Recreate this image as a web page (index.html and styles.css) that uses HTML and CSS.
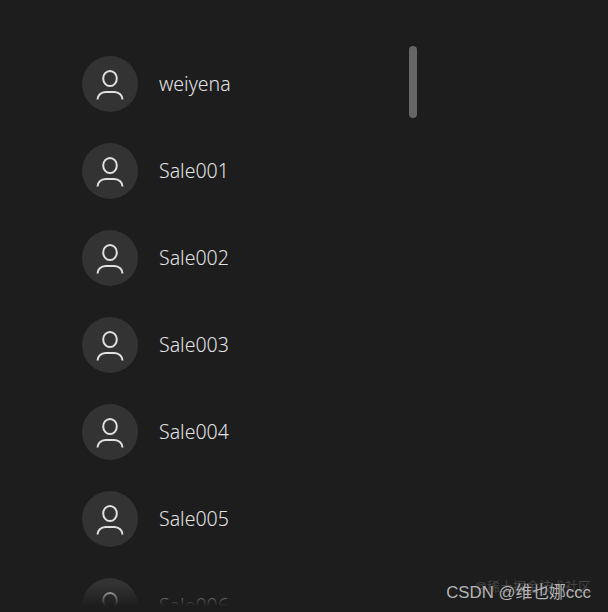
FILE: index.html
```html
<!DOCTYPE html>
<html>
<head>
  <meta charset="utf-8">
  <link rel="stylesheet" href="styles.css">
</head>
<body>
  <div class="user-list">
    <div class="user-row">
      <div class="avatar"><svg width="32" height="32" viewBox="0 0 32 32"><ellipse cx="16" cy="10.500" rx="6.800" ry="7.500"/><path d="M3.500 31.500c0-4 3.500-7.500 8-7.500h9c4.500 0 8 3.500 8 7.500"/></svg></div>
      <div class="user-name">weiyena</div>
    </div>
    <div class="user-row">
      <div class="avatar"><svg width="32" height="32" viewBox="0 0 32 32"><ellipse cx="16" cy="10.500" rx="6.800" ry="7.500"/><path d="M3.500 31.500c0-4 3.500-7.500 8-7.500h9c4.500 0 8 3.500 8 7.500"/></svg></div>
      <div class="user-name">Sale001</div>
    </div>
    <div class="user-row">
      <div class="avatar"><svg width="32" height="32" viewBox="0 0 32 32"><ellipse cx="16" cy="10.500" rx="6.800" ry="7.500"/><path d="M3.500 31.500c0-4 3.500-7.500 8-7.500h9c4.500 0 8 3.500 8 7.500"/></svg></div>
      <div class="user-name">Sale002</div>
    </div>
    <div class="user-row">
      <div class="avatar"><svg width="32" height="32" viewBox="0 0 32 32"><ellipse cx="16" cy="10.500" rx="6.800" ry="7.500"/><path d="M3.500 31.500c0-4 3.500-7.500 8-7.500h9c4.500 0 8 3.500 8 7.500"/></svg></div>
      <div class="user-name">Sale003</div>
    </div>
    <div class="user-row">
      <div class="avatar"><svg width="32" height="32" viewBox="0 0 32 32"><ellipse cx="16" cy="10.500" rx="6.800" ry="7.500"/><path d="M3.500 31.500c0-4 3.500-7.500 8-7.500h9c4.500 0 8 3.500 8 7.500"/></svg></div>
      <div class="user-name">Sale004</div>
    </div>
    <div class="user-row">
      <div class="avatar"><svg width="32" height="32" viewBox="0 0 32 32"><ellipse cx="16" cy="10.500" rx="6.800" ry="7.500"/><path d="M3.500 31.500c0-4 3.500-7.500 8-7.500h9c4.500 0 8 3.500 8 7.500"/></svg></div>
      <div class="user-name">Sale005</div>
    </div>
    <div class="user-row">
      <div class="avatar"><svg width="32" height="32" viewBox="0 0 32 32"><ellipse cx="16" cy="10.500" rx="6.800" ry="7.500"/><path d="M3.500 31.500c0-4 3.500-7.500 8-7.500h9c4.500 0 8 3.500 8 7.500"/></svg></div>
      <div class="user-name">Sale006</div>
    </div>
  </div>

  <!-- overlays -->
  <div class="scroll-thumb"></div>
  <div class="bottom-fade"></div>
  <div class="mark-back">@稀土掘金技术社区</div>
  <div class="mark-front">CSDN @维也娜ccc</div>
</body>
</html>
```

FILE: styles.css
```css
html, body {
  margin: 0;
  height: 100%;
  overflow: hidden;
  background: #1d1d1d;
}

.user-list {
  display: flex;
  flex-direction: column;
  gap: 31px;
  height: 550px;
  padding: 56px 0 0 82px;
  overflow: hidden;
  font-family: "Noto Sans", sans-serif;
}

.user-row {
  display: flex;
  align-items: center;
  gap: 21px;
  flex: none;
}

.avatar {
  display: flex;
  align-items: center;
  justify-content: center;
  width: 56px;
  height: 56px;
  border-radius: 50%;
  background: #333333;
}

.avatar svg {
  fill: none;
  stroke: #e0e0e0;
  stroke-width: 2;
}

.user-name {
  margin-top: -2px;
  font-size: 19.5px;
  font-weight: 300;
  color: #e2e2e2;
}

.scroll-thumb {
  position: absolute;
  left: 409px;
  top: 46px;
  width: 8px;
  height: 72px;
  border-radius: 4px;
  background: #666666;
}

.bottom-fade {
  position: absolute;
  left: 0;
  right: 0;
  top: 584px;
  height: 22px;
  background: linear-gradient(to bottom, rgba(29, 29, 29, 0), #1d1d1d);
}

.mark-back {
  position: absolute;
  right: 17px;
  top: 576px;
  font-family: "Liberation Sans", "Noto Sans CJK SC", sans-serif;
  font-size: 13px;
  color: #444444;
}

.mark-front {
  position: absolute;
  right: 17px;
  top: 579px;
  font-family: "Liberation Sans", "Noto Sans CJK SC", sans-serif;
  font-size: 16.800px;
  color: #b4b4b4;
}
```
